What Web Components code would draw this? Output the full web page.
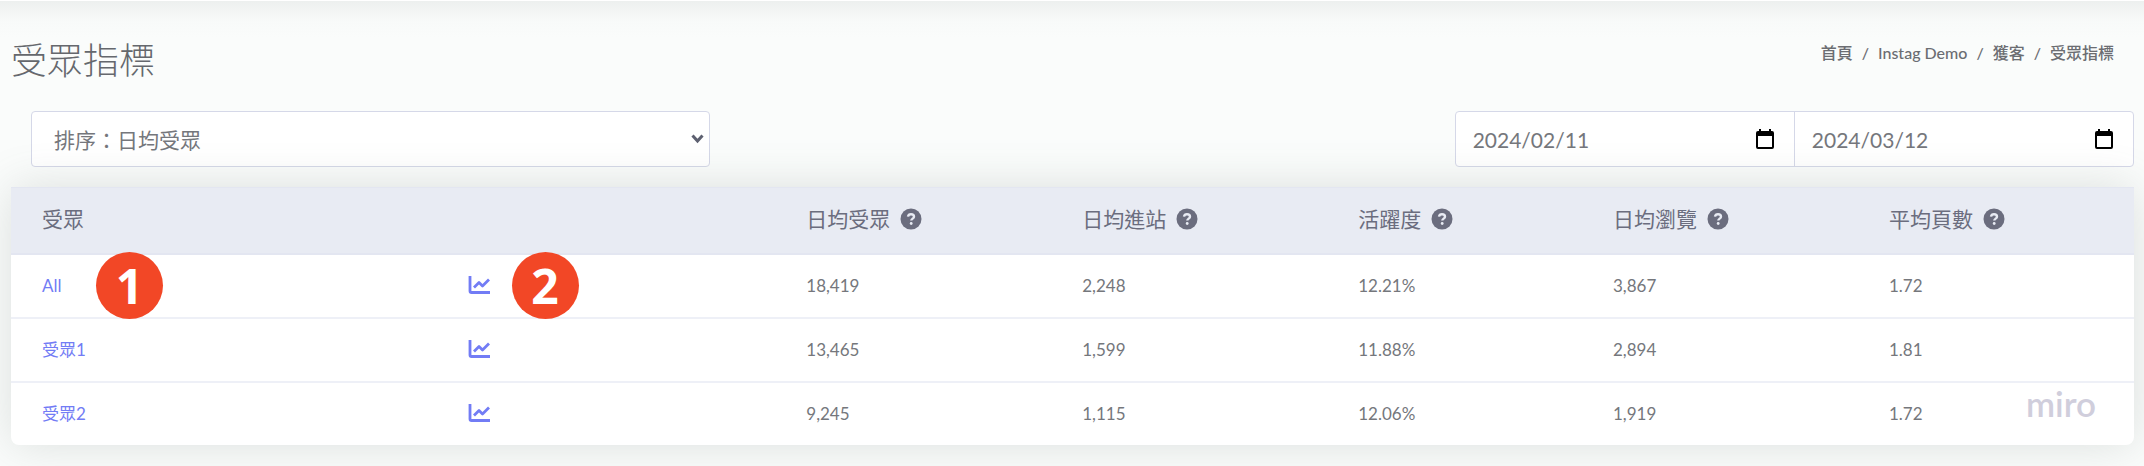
<!DOCTYPE html>
<html lang="zh-Hant">
<head>
<meta charset="utf-8">
<title>受眾指標</title>
<style>
    body {
        margin: 0;
        min-height: 100vh;
        background: #fafcfb;
        color: #75777c;
        font-family: Lato, "Noto Sans CJK TC", sans-serif;
        font-size: 17px;
    }
</style>
</head>
<body>
<audience-page>
    <page-header slot="header" heading="受眾指標">
        <a href="#">首頁</a>
        <a href="#">Instag Demo</a>
        <a href="#">獲客</a>
        <span>受眾指標</span>
    </page-header>
    <sort-select slot="filters"></sort-select>
    <date-range slot="filters" from="2024/02/11" to="2024/03/12"></date-range>
    <audience-table></audience-table>
</audience-page>

<script>
class AudiencePage extends HTMLElement {
    connectedCallback() {
        this.attachShadow({ mode: 'open' });
        this.shadowRoot.innerHTML = `
            <style>
                :host {
                    display: block;
                    box-sizing: border-box;
                    min-height: 100vh;
                    padding: 32px 10px 20px 11px;
                    border-top: 1px solid #fff;
                    background: linear-gradient(#edf0ef, #f8faf9 20px, #fafcfb 36px);
                    overflow: hidden;
                }

                .filters {
                    display: flex;
                    justify-content: space-between;
                    margin: 24px 0 20px;
                }
            </style>
            <slot name="header"></slot>
            <div class="filters"><slot name="filters"></slot></div>
            <slot></slot>
        `;
    }
}

class PageHeader extends HTMLElement {
    connectedCallback() {
        this.attachShadow({ mode: 'open' });
        this.shadowRoot.innerHTML = `
            <style>
                :host {
                    display: flex;
                    justify-content: space-between;
                    align-items: flex-start;
                }

                h1 {
                    margin: 0;
                    color: #65686d;
                    font-size: 36px;
                    font-weight: 300;
                    line-height: 54px;
                }

                nav {
                    display: flex;
                    padding: 8px 20px 0 0;
                    font-size: 16px;
                    font-weight: 500;
                    line-height: 24px;
                }

                ::slotted(*) {
                    color: #6b6d72;
                    text-decoration: none;
                }

                ::slotted(:not(:first-child))::before {
                    content: "/";
                    padding: 0 9px;
                }
            </style>
            <h1>${this.getAttribute('heading')}</h1>
            <nav aria-label="breadcrumb"><slot></slot></nav>
        `;
    }
}

class SortSelect extends HTMLElement {
    connectedCallback() {
        this.attachShadow({ mode: 'open' });
        this.shadowRoot.innerHTML = `
            <style>
                :host {
                    display: block;
                    position: relative;
                    width: 32%;
                    margin-left: 20px;
                }

                select {
                    appearance: none;
                    box-sizing: border-box;
                    width: 100%;
                    height: 56px;
                    padding: 0 40px 0 22px;
                    border: 1px solid #d5d8e8;
                    border-radius: 4px;
                    background: #fff;
                    color: #75777c;
                    font: inherit;
                    font-size: 21px;
                    font-weight: 400;
                }

                svg {
                    position: absolute;
                    right: 6px;
                    top: 22px;
                    pointer-events: none;
                }
            </style>
            <select aria-label="排序">
                <option>排序：日均受眾</option>
                <option>排序：日均進站</option>
                <option>排序：活躍度</option>
            </select>
            <svg width="13" height="12" viewBox="0 0 13 12" fill="none" stroke="#5d6070" stroke-width="3">
                <path d="M1.5 2.5l5 5.5 5-5.5"/>
            </svg>
        `;
    }
}

class DateRange extends HTMLElement {
    connectedCallback() {
        const field = (label, value) => `
            <label>
                <input type="text" aria-label="${label}" value="${value}">
                <svg width="18" height="20" viewBox="0 0 18 20">
                    <path d="M3 0h2v2h8V0h2v2h1a2 2 0 0 1 2 2v14a2 2 0 0 1-2 2H2a2 2 0 0 1-2-2V4a2 2 0 0 1 2-2h1zM2 7v11h14V7z" fill="#000"/>
                </svg>
            </label>`;
        this.attachShadow({ mode: 'open' });
        this.shadowRoot.innerHTML = `
            <style>
                :host {
                    display: flex;
                    box-sizing: border-box;
                    width: 32%;
                    height: 56px;
                    border: 1px solid #d5d8e8;
                    border-radius: 4px;
                    background: #fff;
                }

                label {
                    display: flex;
                    flex: 1;
                    align-items: center;
                    min-width: 0;
                    padding: 0 20px 0 17px;
                }

                label + label {
                    border-left: 1px solid #d5d8e8;
                }

                input {
                    flex: 1;
                    min-width: 0;
                    padding: 0;
                    border: 0;
                    background: none;
                    color: #75777c;
                    font: inherit;
                    font-size: 21px;
                }
            </style>
            ${field('開始日期', this.getAttribute('from'))}
            ${field('結束日期', this.getAttribute('to'))}
        `;
    }
}

class HelpIcon extends HTMLElement {
    connectedCallback() {
        this.attachShadow({ mode: 'open' });
        this.shadowRoot.innerHTML = `
            <style>
                :host {
                    display: block;
                }

                svg {
                    display: block;
                }
            </style>
            <svg width="22" height="22" viewBox="0 0 22 22" fill="none">
                <circle cx="11" cy="11" r="10.5" fill="#6b6d7e"/>
                <path d="M8 8.6C8.3 6.9 9.5 6.2 11 6.2c1.7 0 3 1 3 2.5 0 1.9-2.7 2-2.7 3.9" stroke="#e8ebf3" stroke-width="2.4"/>
                <circle cx="11.2" cy="15.5" r="1.4" fill="#e8ebf3"/>
            </svg>
        `;
    }
}

class StepBadge extends HTMLElement {
    connectedCallback() {
        this.attachShadow({ mode: 'open' });
        this.shadowRoot.innerHTML = `
            <style>
                :host {
                    position: absolute;
                    z-index: 1;
                    top: -3px;
                    display: flex;
                    align-items: center;
                    justify-content: center;
                    width: 67px;
                    height: 67px;
                    border-radius: 50%;
                    background: #f24726;
                    color: #fff;
                    font-family: "Open Sans", sans-serif;
                    font-size: 48px;
                    font-weight: 700;
                    line-height: 67px;
                }
            </style>
            <slot></slot>
        `;
    }
}

const COLUMNS = ['日均受眾', '日均進站', '活躍度', '日均瀏覽', '平均頁數'];
const ROWS = [
    ['All', '18,419', '2,248', '12.21%', '3,867', '1.72'],
    ['受眾1', '13,465', '1,599', '11.88%', '2,894', '1.81'],
    ['受眾2', '9,245', '1,115', '12.06%', '1,919', '1.72'],
];

class AudienceTable extends HTMLElement {
    connectedCallback() {
        const badge = (row, n) => row === 0 ? `<step-badge class="badge-${n}">${n}</step-badge>` : '';
        const rows = ROWS.map(([name, ...values], i) => `
            <tr>
                <td><a href="#">${name}</a>${badge(i, 1)}</td>
                <td>
                    <a href="#" aria-label="${name} 趨勢圖">
                        <svg width="24" height="20" viewBox="0 0 24 20" fill="none" stroke="#727cf5" stroke-width="2.8" stroke-linejoin="round">
                            <path d="M3 0v15a1.5 1.5 0 0 0 1.5 1.5H23"/>
                            <path d="M7 11.5l5-5 3.500 3.500 6.500-6.500"/>
                        </svg>
                    </a>${badge(i, 2)}
                </td>
                ${values.map(v => `<td>${v}</td>`).join('')}
            </tr>`).join('');
        this.attachShadow({ mode: 'open' });
        this.shadowRoot.innerHTML = `
            <style>
                :host {
                    display: block;
                    position: relative;
                    border-radius: 0 0 8px 8px;
                    background: #fff;
                    box-shadow: 0 0 46px rgba(100, 112, 106, 0.2);
                }

                table {
                    width: 100%;
                    border-collapse: separate;
                    border-spacing: 0;
                    table-layout: fixed;
                }

                th, td {
                    position: relative;
                    box-sizing: border-box;
                    padding: 0 0 0 31px;
                    text-align: left;
                    white-space: nowrap;
                }

                th {
                    height: 68px;
                    padding-bottom: 3px;
                    border-top: 1px solid #e3e6f1;
                    border-bottom: 2px solid #e3e6f1;
                    background: #e8ebf3;
                    color: #6b6d7e;
                    font-size: 21px;
                    font-weight: 400;
                    line-height: 30px;
                }

                th div {
                    display: flex;
                    align-items: center;
                    gap: 10px;
                }

                td {
                    height: 64px;
                    border-bottom: 2px solid #eef0f7;
                    line-height: 24px;
                }

                tr:last-child td {
                    height: 62px;
                    border-bottom: 0;
                }

                a {
                    color: #727cf5;
                    text-decoration: none;
                }

                svg {
                    display: block;
                }

                .badge-1 {
                    left: 85px;
                }

                .badge-2 {
                    left: 76px;
                }

                .mark {
                    position: absolute;
                    right: 38px;
                    bottom: 22px;
                    color: #d0cedc;
                    font-size: 35px;
                    font-weight: 600;
                    line-height: 40px;
                }
            </style>
            <table>
                <colgroup>
                    <col style="width: 20%">
                    <col style="width: 16%">
                    <col style="width: 13%">
                    <col style="width: 13%">
                    <col style="width: 12%">
                    <col style="width: 13%">
                    <col style="width: 13%">
                </colgroup>
                <thead>
                    <tr>
                        <th>受眾</th>
                        <th></th>
                        ${COLUMNS.map(c => `<th><div>${c}<help-icon></help-icon></div></th>`).join('')}
                    </tr>
                </thead>
                <tbody>${rows}</tbody>
            </table>
            <div class="mark">miro</div>
        `;
    }
}

customElements.define('audience-page', AudiencePage);
customElements.define('page-header', PageHeader);
customElements.define('sort-select', SortSelect);
customElements.define('date-range', DateRange);
customElements.define('help-icon', HelpIcon);
customElements.define('step-badge', StepBadge);
customElements.define('audience-table', AudienceTable);
</script>
</body>
</html>
